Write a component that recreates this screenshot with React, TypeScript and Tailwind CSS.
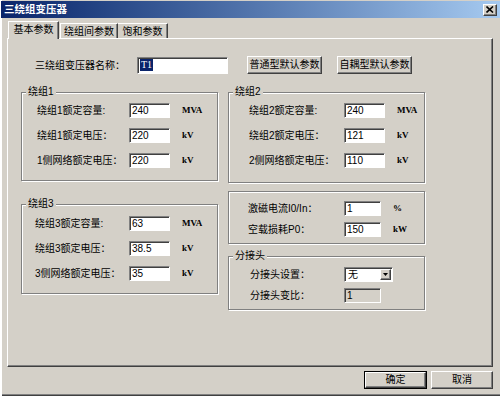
import React from "react";

const raised =
  "border border-t-white border-l-white border-r-[#404040] border-b-[#404040] shadow-[inset_-1px_-1px_0_#808080]";
const sunken =
  "border border-t-[#808080] border-l-[#808080] border-r-white border-b-white shadow-[inset_1px_1px_0_#404040]";
const etched = "border border-[#808080] shadow-[inset_1px_1px_0_#fff,1px_1px_0_#fff]";

interface RowProps {
  label: string;
  value: string;
  unit?: string;
  labelCls: string; // label width
  inputCls: string; // input width
  disabled?: boolean;
}

// one label + edit box + unit line
const Row: React.FC<RowProps> = ({ label, value, unit, labelCls, inputCls, disabled }) => (
  <div className="flex items-center h-[15px]">
    <span className={`${labelCls} whitespace-nowrap leading-[15px]`}>{label}</span>
    <div
      className={`${inputCls} h-[15px] ${sunken} ${disabled ? "bg-[#d4d0c8]" : "bg-white"} pl-[2px] leading-[13px] text-[10px] font-['Liberation_Sans',sans-serif] text-black`}
    >
      {value}
    </div>
    {unit && (
      <span className="ml-[12px] text-[9px] font-bold font-['Liberation_Serif',serif] leading-[15px]">
        {unit}
      </span>
    )}
  </div>
);

const Legend = ({ text }: { text: string }) => (
  <span className="absolute -top-[7px] left-[4px] px-[2px] bg-[#d4d0c8] leading-[12px]">{text}</span>
);

const App = () => {
  return (
    <div className="w-[500px] h-[396px] bg-[#d4d0c8] flex flex-col text-[10px] text-black font-['Liberation_Sans','Noto_Sans_CJK_SC',sans-serif] shadow-[inset_2px_0_0_#fff,inset_0_-1px_0_#404040,inset_0_-2px_0_#808080] overflow-hidden">
      {/* title bar */}
      <div className="mt-[1px] ml-[1px] h-[17px] flex items-center justify-between bg-gradient-to-r from-[#0a246a] to-[#a6caf0] pl-[3px] pr-[3px]">
        <span className="text-white font-bold text-[10.5px] leading-[17px]">三绕组变压器</span>
        <button className={`w-[14px] h-[12px] bg-[#d4d0c8] ${raised} flex items-center justify-center p-0`}>
          <svg width="8" height="7" viewBox="0 0 8 7">
            <path d="M0.5 0.5 L7 6.5 M7 0.5 L0.5 6.5" stroke="#000" strokeWidth="1.6" />
          </svg>
        </button>
      </div>

      {/* tabs */}
      <div className="mt-[3px] h-[17px] flex items-end pl-[8px]">
        <div className="relative z-10 -mb-px h-[18px] w-[51px] bg-[#d4d0c8] border-t border-l border-r border-t-white border-l-white border-r-[#404040] shadow-[inset_-1px_0_0_#808080] flex items-center justify-center pb-[2px]">
          基本参数
        </div>
        <div className="ml-[1px] h-[15px] w-[58px] border-t border-l border-r border-t-white border-l-white border-r-[#404040] shadow-[inset_-1px_0_0_#808080] flex items-center justify-center">
          绕组间参数
        </div>
        <div className="h-[15px] w-[50px] border-t border-r border-t-white border-r-[#404040] shadow-[inset_-1px_0_0_#808080] flex items-center justify-center">
          饱和参数
        </div>
      </div>

      {/* tab page */}
      <div className={`mx-[7px] h-[329px] ${raised} pt-[17px]`}>
        <div className="flex items-center h-[18px] pl-[27px]">
          <span className="w-[102px] whitespace-nowrap">三绕组变压器名称：</span>
          <div className={`w-[91px] h-[17px] bg-white ${sunken} pl-[2px] flex items-center`}>
            <span className="bg-[#0a246a] text-white px-[1px] leading-[12px] font-['Liberation_Serif',serif] text-[10px]">
              T1
            </span>
          </div>
          <button className={`ml-[19px] w-[75px] h-[18px] ${raised} bg-[#d4d0c8] text-[10px] leading-[16px] p-0`}>
            普通型默认参数
          </button>
          <button className={`ml-[15px] w-[75px] h-[18px] ${raised} bg-[#d4d0c8] text-[10px] leading-[16px] p-0`}>
            自耦型默认参数
          </button>
        </div>

        <div className="mt-[18px] pl-[13px] flex gap-[10px]">
          {/* left column */}
          <div className="flex flex-col w-[197px]">
            <div className={`relative h-[89px] ${etched} pt-[10px] pl-[15px] flex flex-col gap-[10px]`}>
              <Legend text="绕组1" />
              <Row label="绕组1额定容量:" value="240" unit="MVA" labelCls="w-[92px]" inputCls="w-[41px]" />
              <Row label="绕组1额定电压：" value="220" unit="kV" labelCls="w-[92px]" inputCls="w-[41px]" />
              <Row label="1侧网络额定电压：" value="220" unit="kV" labelCls="w-[92px]" inputCls="w-[41px]" />
            </div>
            <div className={`relative mt-[23px] h-[90px] ${etched} pt-[11px] pl-[13px] flex flex-col gap-[10px]`}>
              <Legend text="绕组3" />
              <Row label="绕组3额定容量:" value="63" unit="MVA" labelCls="w-[94px]" inputCls="w-[41px]" />
              <Row label="绕组3额定电压：" value="38.5" unit="kV" labelCls="w-[94px]" inputCls="w-[41px]" />
              <Row label="3侧网络额定电压：" value="35" unit="kV" labelCls="w-[94px]" inputCls="w-[41px]" />
            </div>
          </div>

          {/* right column */}
          <div className="flex flex-col w-[197px]">
            <div className={`relative h-[91px] ${etched} pt-[10px] pl-[20px] flex flex-col gap-[10px]`}>
              <Legend text="绕组2" />
              <Row label="绕组2额定容量:" value="240" unit="MVA" labelCls="w-[95px]" inputCls="w-[41px]" />
              <Row label="绕组2额定电压：" value="121" unit="kV" labelCls="w-[95px]" inputCls="w-[41px]" />
              <Row label="2侧网络额定电压：" value="110" unit="kV" labelCls="w-[95px]" inputCls="w-[41px]" />
            </div>
            <div className={`mt-[8px] h-[53px] ${etched} pt-[9px] pl-[19px] flex flex-col gap-[6px]`}>
              <Row label="激磁电流I0/In：" value="1" unit="%" labelCls="w-[96px]" inputCls="w-[37px]" />
              <Row label="空载损耗P0：" value="150" unit="kW" labelCls="w-[96px]" inputCls="w-[37px]" />
            </div>
            <div className={`relative mt-[12px] h-[54px] ${etched} pt-[10px] pl-[21px] flex flex-col gap-[6px]`}>
              <Legend text="分接头" />
              <div className="flex items-center h-[15px]">
                <span className="w-[94px] whitespace-nowrap">分接头设置：</span>
                <div className={`w-[49px] h-[15px] bg-white ${sunken} flex items-center justify-between`}>
                  <span className="pl-[3px] leading-[12px]">无</span>
                  <div className={`w-[11px] h-[11px] mr-[1px] bg-[#d4d0c8] ${raised} flex items-center justify-center`}>
                    <svg width="5" height="3" viewBox="0 0 5 3">
                      <path d="M0 0 H5 L2.5 3 Z" fill="#000" />
                    </svg>
                  </div>
                </div>
              </div>
              <Row label="分接头变比：" value="1" labelCls="w-[94px]" inputCls="w-[37px]" disabled />
            </div>
          </div>
        </div>
      </div>

      {/* dialog buttons */}
      <div className="mt-[4px] flex justify-end gap-[4px] pr-[7px]">
        <div className="w-[63px] h-[18px] border border-black">
          <button className={`w-full h-full ${raised} bg-[#d4d0c8] text-[10px] leading-[14px] p-0`}>确定</button>
        </div>
        <button className={`w-[62px] h-[18px] ${raised} bg-[#d4d0c8] text-[10px] leading-[16px] p-0`}>取消</button>
      </div>
    </div>
  );
};

export default App;
